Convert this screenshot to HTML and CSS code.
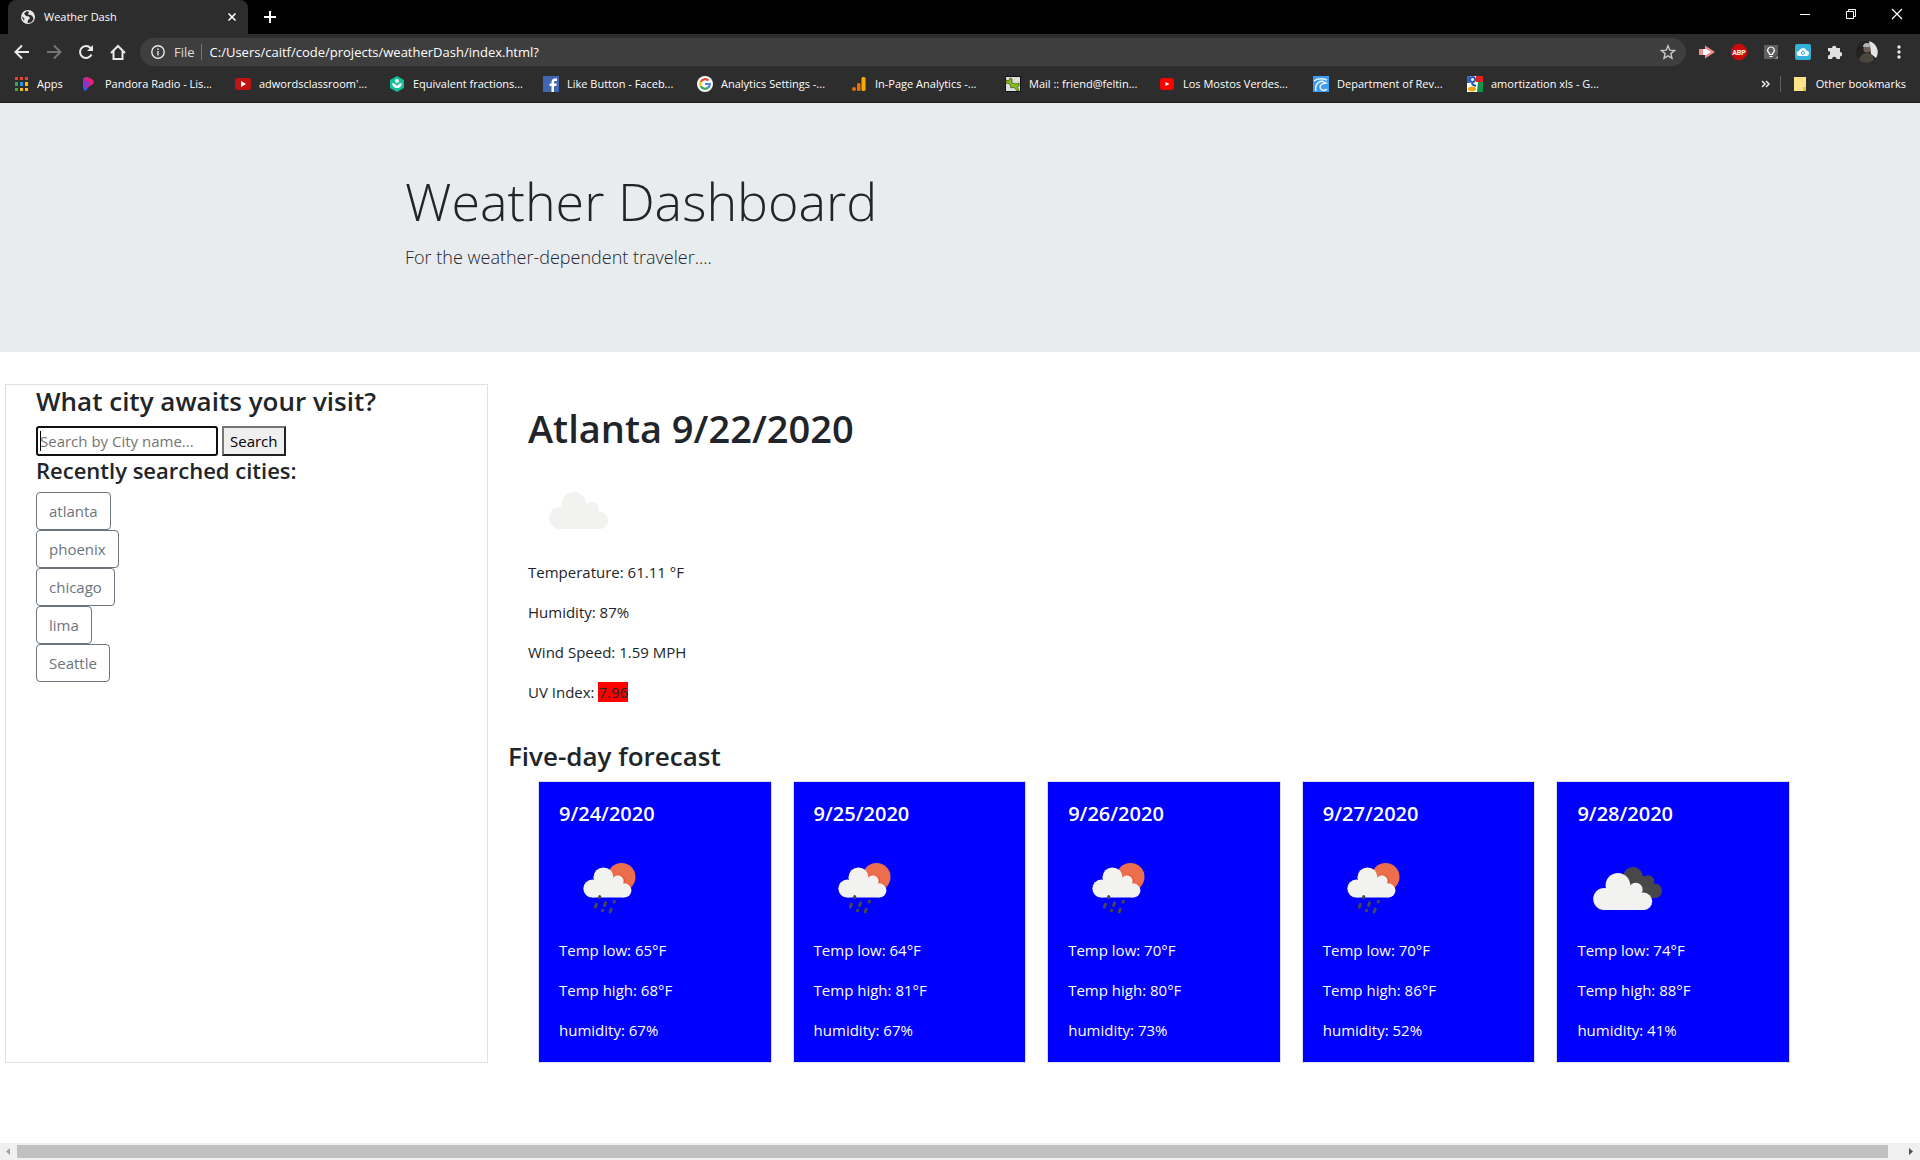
FILE: index.html
```html
<!DOCTYPE html>
<html lang="en">
<head>
<meta charset="utf-8">
<title>Weather Dash</title>
<link rel="stylesheet" href="styles.css">
</head>
<body>
<svg class="sprite" aria-hidden="true">
  <symbol id="cloud" viewBox="0 0 100 100">
    <g fill="#f2f2f0"><circle cx="32" cy="58" r="11"/><circle cx="45.7" cy="44.3" r="12.3"/><circle cx="63.5" cy="48.7" r="7"/><circle cx="71.3" cy="60.3" r="8.7"/><path d="M32 52L46 44L64 48L71 56V69H32Z"/></g>
  </symbol>
  <symbol id="rain" viewBox="0 0 100 100">
    <circle cx="62.5" cy="39" r="14" fill="#ec6e4c"/>
    <g transform="translate(7.2 3.3) scale(.815)" stroke="#e8502f" stroke-width="1.6"><path fill="none" d="M58 45a7 7 0 0 1 12.5 7.5a8.7 8.7 0 0 1 9 4"/></g>
    <use href="#cloud" x="0" y="0" width="100" height="100" transform="translate(7.2 3.3) scale(.815)"/>
    <g stroke="#48484a" stroke-width="3" stroke-linecap="round"><path d="M40.8 58.6l-.3 1M37.4 66.2l-1 2.8M46.6 64.8l-1 2.8M55.4 63.4l-.2.6M43.7 72.2l-.2.6M52.2 71.2l-1 2.8"/></g>
  </symbol>
  <symbol id="clouds" viewBox="0 0 100 100">
    <g fill="#48484a"><circle cx="56" cy="39" r="10"/><circle cx="71" cy="43.5" r="6.2"/><circle cx="77.8" cy="52.8" r="7.2"/><path d="M56 34L71 40L80 50V60H56Z"/></g>
    <use href="#cloud" x="0" y="0" width="100" height="100" transform="translate(-4.8 3)"/>
  </symbol>
</svg>

<header class="browser">
  <div class="tabs">
    <div class="tab">
      <svg class="fav" viewBox="0 0 16 16"><circle cx="8" cy="8" r="7" fill="#e8eaed"/><path d="M7 2L4 4.500 6 7l3 .5 1 2-2 1.500-.5 3L11 13.500l2.500-3L13 8l-2-2-3-.5L9 3ZM1.500 7l3 2.500L4 12Z" fill="#2d2d2d"/></svg>
      <span class="tab-title">Weather Dash</span>
      <button class="icon-btn" aria-label="Close tab"><svg width="10" height="10" viewBox="0 0 10 10"><path d="M1.500 1.500l7 7M8.500 1.500l-7 7" stroke="#fff" stroke-width="1.600"/></svg></button>
    </div>
    <button class="icon-btn new-tab" aria-label="New tab"><svg width="14" height="14" viewBox="0 0 14 14"><path d="M7 1v12M1 7h12" stroke="#fff" stroke-width="2"/></svg></button>
    <div class="window-buttons">
      <button class="icon-btn" aria-label="Minimize"><svg width="12" height="12"><path d="M1 6.500h10" stroke="#fff"/></svg></button>
      <button class="icon-btn" aria-label="Restore"><svg width="12" height="12" fill="none" stroke="#fff"><path d="M1.500 3.500h7v7h-7zM3.500 3.500v-2h7v7h-2"/></svg></button>
      <button class="icon-btn" aria-label="Close"><svg width="12" height="12"><path d="M1 1l10 10M11 1L1 11" stroke="#fff" stroke-width="1.200"/></svg></button>
    </div>
  </div>

  <div class="toolbar">
    <div class="nav">
      <button class="icon-btn" aria-label="Back"><svg width="16" height="16" fill="none" stroke="#e8eaed" stroke-width="2"><path d="M15 8H2M8 1.500L1.500 8 8 14.500"/></svg></button>
      <button class="icon-btn" aria-label="Forward"><svg width="16" height="16" fill="none" stroke="#757575" stroke-width="2"><path d="M1 8h13M8 1.500L14.500 8 8 14.500"/></svg></button>
      <button class="icon-btn" aria-label="Reload"><svg width="16" height="16" fill="none" stroke="#e8eaed" stroke-width="2"><path d="M13.500 10.500A6 6 0 1 1 12.500 4L14 5.500"/><path d="M15 1v6H9Z" fill="#e8eaed" stroke="none"/></svg></button>
      <button class="icon-btn" aria-label="Home"><svg width="16" height="16" fill="none" stroke="#e8eaed" stroke-width="2"><path d="M1 9L8 2 15 9M3.500 7v8h9V7"/></svg></button>
    </div>
    <div class="address">
      <svg width="14" height="14" fill="none" stroke="#e8eaed" stroke-width="1.400"><circle cx="7" cy="7" r="6.200"/><path d="M7 6v4.500M7 3.500v1.500"/></svg>
      <span class="scheme">File</span>
      <input class="url" aria-label="Address" value="C:/Users/caitf/code/projects/weatherDash/index.html?">
      <svg width="16" height="16" fill="none" stroke="#c8c8c8" stroke-width="1.400"><path d="M8 1.800l1.800 4.400 4.700.4-3.600 3 1.100 4.600L8 11.800l-4 2.400 1.100-4.600-3.600-3 4.700-.4Z"/></svg>
    </div>
    <div class="extensions">
      <svg width="16" height="16"><path d="M0 5h6V1.500L16 8 6 14.500V11H0Z" fill="#f28b8b"/><path d="M4 5h3l5 3-5 3H4Z" fill="#fff"/></svg>
      <svg width="16" height="16"><path d="M5 0h6l5 5v6l-5 5H5l-5-5V5Z" fill="#c70d0d"/><text x="8" y="11" text-anchor="middle" class="abp">ABP</text></svg>
      <svg width="16" height="16"><path d="M1 1h14v9l-5 5H1Z" fill="#5f5f5f"/><path d="M11 15l4-4v4Z" fill="#888"/><path d="M6.500 9.500C3 7 5 3 8 3s5 4 1.500 6.500v1h-3ZM6.500 12.500h3" fill="none" stroke="#fff" stroke-width="1.200"/></svg>
      <svg width="16" height="16"><rect width="16" height="16" rx="2" fill="#35b1d6"/><path d="M4.500 12a2.500 2.500 0 0 1-.5-5 4 4 0 0 1 7.500-.5A2.800 2.800 0 0 1 12 12Z" fill="#fff"/><circle cx="8" cy="8.800" r="1.600" fill="none" stroke="#35b1d6"/></svg>
      <svg width="16" height="16"><path d="M1 4h4a2.200 2.200 0 1 1 4.400 0H13v4a2.200 2.200 0 1 1 0 4.400V15H9.500a2.200 2.200 0 0 0-4.400 0H1v-3.600a2.200 2.200 0 0 0 0-4.400Z" fill="#e0e0e0"/></svg>
      <svg width="22" height="22"><circle cx="11" cy="11" r="11" fill="#23221f"/><path d="M13 0.300A11 11 0 0 1 20 17l-5-4Z" fill="#e2e6e8"/><path d="M3 19q2-7 8-7t7 7q-7 6-15 0" fill="#4a473f"/><circle cx="11" cy="8" r="3.500" fill="#6f5e53"/><path d="M7 6q0-4 4-4t4 4Z" fill="#aab4ba"/></svg>
      <svg width="4" height="16" fill="#e8eaed"><circle cx="2" cy="3" r="1.700"/><circle cx="2" cy="8" r="1.700"/><circle cx="2" cy="13" r="1.700"/></svg>
    </div>
  </div>

  <nav class="bookmarks">
    <a class="bookmark apps" href="#"><svg viewBox="0 0 16 16"><path fill="#ea4335" d="M2 1h3v3H2zM7 1h3v3H7zM12 1h3v3h-3z"/><path fill="#34a853" d="M2 6h3v4H2zM2 12h3v3H2z"/><path fill="#2196f3" d="M7 6h3v4H7z"/><path fill="#fbbc05" d="M12 6h3v4h-3zM7 12h3v3H7zM12 12h3v3h-3z"/></svg>Apps</a>
    <a class="bookmark" href="#"><svg viewBox="0 0 16 16"><path fill="#3658e8" d="M2 2l5-1v9l-1 4-3 1Z"/><path fill="#e81f74" d="M4 1l5 1q4 2 4 4t-4 4L6 12 2 8Z"/><path fill="#8136cf" d="M2 4l7 2-2 5H4L2 13Z"/></svg>Pandora Radio - Lis...</a>
    <a class="bookmark" href="#"><svg viewBox="0 0 16 16"><rect y="2" width="16" height="12" rx="2" fill="#bd1414"/><path fill="#fff" d="M6 5l5 3-5 3Z"/></svg>adwordsclassroom'...</a>
    <a class="bookmark" href="#"><svg viewBox="0 0 16 16"><path fill="#14bf96" d="M8 0l7 4v8l-7 4-7-4V4Z"/><circle cx="8" cy="5" r="2" fill="#fff"/><path fill="#fff" d="M3 7q3 0 5 3 2-3 5-3-.5 5-5 5T3 7Z"/></svg>Equivalent fractions...</a>
    <a class="bookmark" href="#"><svg viewBox="0 0 16 16"><path fill="#4267b2" d="M0 0h16v16H0z"/><path fill="#fff" d="M8.500 16v-6H6.500V7.500h2V6q0-3.500 3.500-3.500h2V5h-1.500Q11 5 11 6.300v1.200h2.800L13.400 10H11v6Z"/></svg>Like Button - Faceb...</a>
    <a class="bookmark" href="#"><svg viewBox="0 0 16 16"><circle cx="8" cy="8" r="8" fill="#fff"/><g fill="none" stroke-width="2.200"><path stroke="#ea4335" d="M3.800 5.800A4.800 4.800 0 0 1 11.500 4.600"/><path stroke="#fbbc05" d="M3.800 5.800a4.800 4.800 0 0 0 0 4.400"/><path stroke="#34a853" d="M3.800 10.200A4.800 4.800 0 0 0 11 11.700"/><path stroke="#4285f4" d="M11 11.700Q12.700 10.400 12.800 8H8"/></g></svg>Analytics Settings -...</a>
    <a class="bookmark" href="#"><svg viewBox="0 0 16 16"><circle cx="3" cy="13" r="2" fill="#e8710a"/><rect x="6" y="7" width="3.500" height="8" rx="1.500" fill="#e8710a"/><rect x="10.500" y="1" width="4" height="14" rx="1.500" fill="#f9ab00"/></svg>In-Page Analytics -...</a>
    <a class="bookmark" href="#"><svg viewBox="0 0 16 16"><path fill="#111" d="M0 0h16v16H0z"/><path fill="#ddd" d="M1 1h14v14H1z"/><path fill="#8bbf1b" stroke="#345207" stroke-width=".7" d="M1 4l3 1 1-3 2 1v4l4 1 3-1v3l-2 1 2 3-2 1-3-4-3 1-1-4-4-1Z"/></svg>Mail :: friend@feltin...</a>
    <a class="bookmark" href="#"><svg viewBox="0 0 16 16"><rect x="1" y="2" width="14" height="12" rx="3" fill="#f00"/><path fill="#fff" d="M6.500 6l4 2-4 2Z"/></svg>Los Mostos Verdes...</a>
    <a class="bookmark" href="#"><svg viewBox="0 0 16 16"><path fill="#3d9bf0" d="M0 0h16v16H0z"/><path fill="none" stroke="#e6f4ff" stroke-width="1.500" d="M1 5q5-4 13-1M3 15Q1 7 9 5l4 2-4 1q-4 3 0 6M9 14q3 1 5-1"/></svg>Department of Rev...</a>
    <a class="bookmark" href="#"><svg viewBox="0 0 16 16"><path fill="#fff" d="M0 0h16v16H0z"/><path fill="#d22" d="M9 0h7v6H9z"/><path fill="#149348" d="M11 6h5v10h-6z"/><path fill="#3366c9" d="M0 0h3v7H0z"/><circle cx="5.500" cy="3.500" r="2.500" fill="none" stroke="#2358b8" stroke-width="2"/><ellipse cx="5" cy="13" rx="4" ry="2.500" fill="#f0a911"/><path d="M5 7q0 2 4 3" stroke="#2358b8" stroke-width="2" fill="none"/></svg>amortization xls - G...</a>
    <div class="more">
      <svg width="9" height="8" fill="none" stroke="#e8eaed" stroke-width="1.500"><path d="M1 1l3 3-3 3M5 1l3 3-3 3"/></svg>
      <a class="bookmark other" href="#"><svg viewBox="0 0 16 16"><path fill="#ffe28a" d="M2 1h12v14H2z"/><path fill="#e8c04c" d="M11 11h3v4h-3z"/></svg>Other bookmarks</a>
    </div>
  </nav>
</header>

<section class="jumbotron">
  <div class="container">
    <h1>Weather Dashboard</h1>
    <p class="lead">For the weather-dependent traveler....</p>
  </div>
</section>

<main class="dashboard">
  <aside class="sidebar">
    <h2><label for="city">What city awaits your visit?</label></h2>
    <form class="search">
      <input id="city" type="text" placeholder="Search by City name...">
      <button type="button">Search</button>
    </form>
    <h4>Recently searched cities:</h4>
    <div class="cities">
      <button class="city">atlanta</button>
      <button class="city">phoenix</button>
      <button class="city">chicago</button>
      <button class="city">lima</button>
      <button class="city">Seattle</button>
    </div>
  </aside>
  <div class="results">
    <section class="current">
      <h1>Atlanta 9/22/2020</h1>
      <svg class="weather"><use href="#cloud"/></svg>
      <p>Temperature: 61.11 °F</p>
      <p>Humidity: 87%</p>
      <p>Wind Speed: 1.59 MPH</p>
      <p>UV Index: <span class="uv">7.96</span></p>
    </section>
    <h2>Five-day forecast</h2>
    <section class="forecast">
      <article class="card"><h5>9/24/2020</h5><svg class="weather"><use href="#rain"/></svg><p>Temp low: 65°F</p><p>Temp high: 68°F</p><p>humidity: 67%</p></article>
      <article class="card"><h5>9/25/2020</h5><svg class="weather"><use href="#rain"/></svg><p>Temp low: 64°F</p><p>Temp high: 81°F</p><p>humidity: 67%</p></article>
      <article class="card"><h5>9/26/2020</h5><svg class="weather"><use href="#rain"/></svg><p>Temp low: 70°F</p><p>Temp high: 80°F</p><p>humidity: 73%</p></article>
      <article class="card"><h5>9/27/2020</h5><svg class="weather"><use href="#rain"/></svg><p>Temp low: 70°F</p><p>Temp high: 86°F</p><p>humidity: 52%</p></article>
      <article class="card"><h5>9/28/2020</h5><svg class="weather"><use href="#clouds"/></svg><p>Temp low: 74°F</p><p>Temp high: 88°F</p><p>humidity: 41%</p></article>
    </section>
  </div>
</main>

<div class="scrollbar">
  <svg width="17" height="17"><path d="M10 5v7L6 8.500Z" fill="#a3a3a3"/></svg>
  <div class="thumb"></div>
  <svg class="right" width="17" height="17"><path d="M6 5v7l4-3.500Z" fill="#505050"/></svg>
</div>
</body>
</html>
```
FILE: styles.css
```css
* { box-sizing: border-box; }
body {
  margin: 0;
  min-height: 100vh;
  display: flex;
  flex-direction: column;
  background: #fff;
  color: #212529;
  font: 15px/24px "Open Sans", "Noto Sans", sans-serif;
}
h1, h2, h4, h5, p { margin: 0; }
svg { display: block; flex: none; }
.sprite { display: none; }

/* Browser frame */
.browser { background: #2d2d2d; color: #fff; border-bottom: 1px solid #1e1e1e; font-size: 11px; line-height: 16px; }
.icon-btn { display: flex; align-items: center; justify-content: center; padding: 0; border: 0; background: none; }
.tabs { display: flex; height: 34px; padding-left: 8px; background: #000; }
.tab { display: flex; align-items: center; width: 240px; padding: 0 11px 0 12px; border-radius: 8px 8px 0 0; background: #2d2d2d; }
.fav { width: 16px; height: 16px; }
.tab-title { flex: 1; padding-left: 8px; }
.new-tab { width: 44px; }
.window-buttons { display: flex; margin-left: auto; }
.window-buttons .icon-btn { width: 46px; height: 28px; }
.toolbar { display: flex; align-items: center; height: 36px; padding: 0 19px 0 6px; }
.nav { display: flex; width: 134px; }
.nav .icon-btn { width: 32px; height: 32px; }
.address { display: flex; flex: 1; align-items: center; height: 28px; padding: 0 10px 0 11px; border-radius: 14px; background: #3e3e3e; font-size: 13px; }
.scheme { margin-left: 9px; padding-right: 6px; border-right: 1px solid #777; color: #ddd; }
.url { flex: 1; padding: 0 0 0 8px; border: 0; outline: 0; background: none; color: #fff; font: inherit; }
.extensions { display: flex; align-items: center; gap: 16px; padding-left: 13px; }
.extensions svg:nth-last-child(-n+2) { margin-left: -3px; }
.extensions svg:last-child { margin-left: 3px; }
.abp { fill: #fff; font: bold 7px Roboto, sans-serif; }
.bookmarks { display: flex; align-items: center; height: 32px; padding: 0 14px 4px 13px; }
.bookmark { display: flex; align-items: center; gap: 8px; width: 154px; color: #fff; text-decoration: none; white-space: nowrap; }
.bookmark svg { width: 16px; height: 16px; }
.apps { width: 68px; }
.more { display: flex; align-items: center; gap: 10px; margin-left: auto; }
.other { width: auto; padding-left: 11px; border-left: 1px solid #5f5f5f; }

/* Banner */
.jumbotron { padding: 64px 32px 80px; background: #e9ecef; }
.container { max-width: 1140px; margin: 0 auto; padding: 0 15px; }
.jumbotron h1 { margin-bottom: 8px; font-size: 52px; line-height: 67px; font-weight: 300; }
.lead { font-size: 18px; line-height: 30px; font-weight: 300; }

/* Dashboard */
.dashboard { display: flex; gap: 20px; padding: 32px 130px 0 5px; }
.sidebar { flex: none; width: 483px; padding-left: 30px; border: 1px solid #dee2e6; }
h2 { margin-bottom: 8px; font-size: 26px; line-height: 33px; font-weight: 600; }
.search { position: relative; display: flex; gap: 4px; }
.search::before { content: ""; position: absolute; left: 4px; top: 5px; width: 1px; height: 20px; background: #000; }
.search input { width: 182px; height: 30px; padding: 0 2px; border: 2px solid #101010; border-radius: 3px; outline: 0; font: inherit; }
.search input::placeholder { color: #757575; }
.search button { height: 30px; padding: 0 6px; border: 2px solid; border-color: #767676 #212121 #212121 #767676; background: #efefef; color: #000; font: inherit; }
h4 { margin-bottom: 8px; font-size: 22px; line-height: 28px; font-weight: 600; }
.cities { display: flex; flex-direction: column; align-items: flex-start; }
.city { height: 38px; padding: 0 12px; border: 1px solid #6c757d; border-radius: 4px; background: #fff; color: #6c757d; font: inherit; }
.results { flex: 1; }
.current { padding: 20px 20px 36px; }
.current h1 { margin-bottom: 8px; font-size: 38px; line-height: 48px; font-weight: 600; }
.weather { width: 100px; height: 100px; }
p + p { margin-top: 16px; }
.uv { background: red; }
.forecast { display: grid; grid-template-columns: repeat(5, 1fr); gap: 21px; padding-left: 30px; }
.card { padding: 20px; border: 1px solid #dee2e6; background: #00f; color: #fff; }
h5 { margin-bottom: 12px; font-size: 20px; line-height: 24px; font-weight: 600; }

/* Page scroll bar */
.scrollbar { display: flex; align-items: center; height: 17px; margin-top: auto; background: #f0f0f0; }
.thumb { flex: 1; height: 13px; background: #c0c0c0; }
.scrollbar .right { margin-left: 15px; }
```
